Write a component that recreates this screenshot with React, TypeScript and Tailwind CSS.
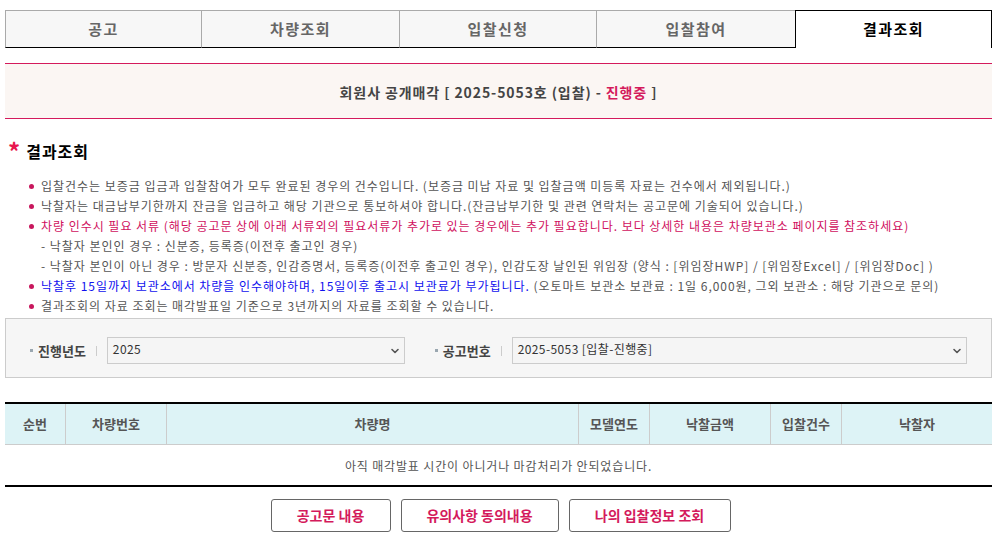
import { ChevronDown } from "lucide-react";

const tabs = [
  { t: "공고", w: "w-[196px]" },
  { t: "차량조회", w: "w-[198px]" },
  { t: "입찰신청", w: "w-[197px]" },
  { t: "입찰참여", w: "w-[199px]" },
  { t: "결과조회", w: "flex-1" },
];
const cols = [
  { label: "순번", w: "w-[60px]" },
  { label: "차량번호", w: "w-[101px]" },
  { label: "차량명", w: "w-[412px]" },
  { label: "모델연도", w: "w-[71px]" },
  { label: "낙찰금액", w: "w-[121px]" },
  { label: "입찰건수", w: "w-[71px]" },
  { label: "낙찰자", w: "flex-1" },
];

function Bullet({ children }: { children: React.ReactNode }) {
  return (
    <li className="flex h-5 items-center">
      <span className="mr-[7px] ml-[24px] h-[5px] w-[5px] shrink-0 rounded-full bg-[#c8175d]" />
      <span className="whitespace-nowrap">{children}</span>
    </li>
  );
}

function Field({ label, width, value }: { label: string; width: string; value: string }) {
  return (
    <div className="flex items-center">
      <span className="mr-[5px] h-[3px] w-[3px] bg-[#9aa7b0]" />
      <span className="text-[13px] font-bold text-[#444]">{label}</span>
      <span className="mr-[10px] ml-[10px] h-[10px] w-px bg-[#ccc]" />
      <div
        className={`${width} flex h-[27px] items-center justify-between border border-[#ccc] bg-[#f5f5f5] pr-[3px] pl-[5px] text-[12px] tracking-[0.4px] text-[#333]`}
      >
        <span className="-mt-[4px]">{value}</span>
        <ChevronDown size={12} strokeWidth={3.2} className="text-[#555]" />
      </div>
    </div>
  );
}

export default function App() {
  return (
    <div
      className="w-[995px] bg-white pt-[10px] pl-[5px] text-[#555]"
      style={{ fontFamily: '"Noto Sans CJK KR", "Noto Sans", sans-serif' }}
    >
      <div className="w-[987px]">
        {/* tabs */}
        <div className="flex h-[38px]">
          {tabs.map((tab, i) =>
            i === tabs.length - 1 ? (
              <div
                key={tab.t}
                className={`${tab.w} flex items-center justify-center border-x border-t border-black bg-white text-[15px] font-bold tracking-[1.5px] text-black`}
              >
                {tab.t}
              </div>
            ) : (
              <div
                key={tab.t}
                className={`${tab.w} flex items-center justify-center border-t border-b border-l border-t-[#aaa] border-l-[#aaa] border-b-black bg-[#f7f7f7] text-[15px] font-bold tracking-[1.5px] text-[#666]`}
              >
                {tab.t}
              </div>
            ),
          )}
        </div>

        {/* notice header */}
        <div className="mt-[15px] flex h-[56px] items-center justify-center border-y border-[#d41a5c] bg-[#fbf6f3] pt-[2px] text-[14px] font-bold tracking-[0.9px] text-[#444]">
          회원사 공개매각 [ 2025-5053호 (입찰) - <span className="ml-[4px] text-[#d41a5c]">진행중</span>&nbsp;]
        </div>

        {/* title */}
        <div className="mt-[20px] flex items-center">
          <span className="ml-[3px] text-[24px] leading-none font-bold text-[#e8174f]">*</span>
          <span className="ml-[6px] text-[16px] font-bold tracking-[1px] text-black">결과조회</span>
        </div>

        <ul className="mt-[13px] text-[12px] tracking-[0.97px] text-[#555]">
          <Bullet>
            입찰건수는 보증금 입금과 입찰참여가 모두 완료된 경우의 건수입니다. (보증금 미납 자료 및 입찰금액 미등록 자료는 건수에서 제외됩니다.)
          </Bullet>
          <Bullet>
            낙찰자는 대금납부기한까지 잔금을 입금하고 해당 기관으로 통보하셔야 합니다.(잔금납부기한 및 관련 연락처는 공고문에 기술되어 있습니다.)
          </Bullet>
          <Bullet>
            <span className="text-[#d0105e]">
              차량 인수시 필요 서류 (해당 공고문 상에 아래 서류외의 필요서류가 추가로 있는 경우에는 추가 필요합니다. 보다 상세한 내용은 차량보관소 페이지를 참조하세요)
            </span>
          </Bullet>
          <li className="flex h-5 items-center pl-[36px] whitespace-nowrap">
            - 낙찰자 본인인 경우 : 신분증, 등록증(이전후 출고인 경우)
          </li>
          <li className="flex h-5 items-center pl-[36px] whitespace-nowrap">
            - 낙찰자 본인이 아닌 경우 : 방문자 신분증, 인감증명서, 등록증(이전후 출고인 경우), 인감도장 날인된 위임장 (양식 : [위임장HWP] / [위임장Excel] / [위임장Doc] )
          </li>
          <Bullet>
            <span className="text-[#1010ee]">
              낙찰후 15일까지 보관소에서 차량을 인수해야하며, 15일이후 출고시 보관료가 부가됩니다.
            </span>{" "}
            (오토마트 보관소 보관료 : 1일 6,000원, 그외 보관소 : 해당 기관으로 문의)
          </Bullet>
          <Bullet>결과조회의 자료 조회는 매각발표일 기준으로 3년까지의 자료를 조회할 수 있습니다.</Bullet>
        </ul>

        {/* filter */}
        <div className="mt-[2px] flex h-[60px] items-center border border-[#ccc] bg-[#f6f6f6] pt-[5px] pl-[24px]">
          <Field label="진행년도" width="w-[298px]" value="2025" />
          <div className="ml-[30px]">
            <Field label="공고번호" width="w-[455px]" value="2025-5053 [입찰-진행중]" />
          </div>
        </div>

        {/* table */}
        <div className="mt-[24px] border-t-2 border-b-2 border-black">
          <div className="flex h-[41px] border-b border-[#ccc] bg-[#ddf3f6]">
            {cols.map((c, i) => (
              <div
                key={c.label}
                className={`${c.w} flex items-center justify-center text-[13px] font-bold text-[#555] ${i > 0 ? "border-l border-[#ccc]" : ""}`}
              >
                {c.label}
              </div>
            ))}
          </div>
          <div className="flex h-[40px] items-center justify-center pt-[2px] text-[12px] tracking-[0.85px] text-[#555]">
            아직 매각발표 시간이 아니거나 마감처리가 안되었습니다.
          </div>
        </div>

        {/* buttons */}
        <div className="mt-[12px] flex justify-center gap-[10px] pl-[4px]">
          {[
            ["공고문 내용", "w-[120px]"],
            ["유의사항 동의내용", "w-[158px]"],
            ["나의 입찰정보 조회", "w-[162px]"],
          ].map(([t, w]) => (
            <button
              key={t}
              className={`${w} h-[33px] rounded-[3px] border border-[#666] bg-white text-[14px] font-bold text-[#d41a5c]`}
            >
              {t}
            </button>
          ))}
        </div>
      </div>
    </div>
  );
}
